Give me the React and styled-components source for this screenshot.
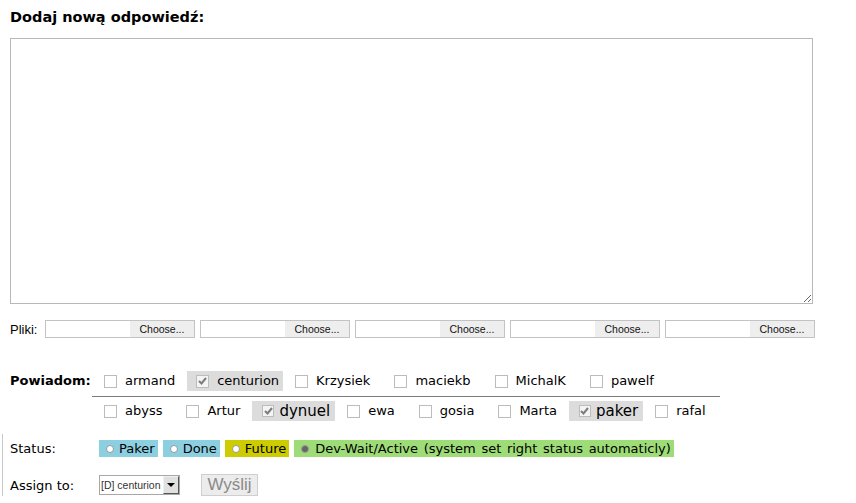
import React from "react";
import styled, { createGlobalStyle, css } from "styled-components";

const Global = createGlobalStyle`
  html, body { margin: 0; padding: 0; background: #fff; }
  body { font-family: "DejaVu Sans", Verdana, sans-serif; font-size: 13px; color: #000; }
`;

const Page = styled.div`
  width: 856px;
  height: 503px;
  padding-left: 10px;
  box-sizing: border-box;
  overflow: hidden;
`;

const Title = styled.h3`
  margin: 0;
  padding-top: 8px;
  height: 38px;
  box-sizing: border-box;
  font-size: 14.5px;
  line-height: 18px;
  font-weight: bold;
`;

const TextArea = styled.textarea`
  display: block;
  width: 803px;
  height: 266px;
  box-sizing: border-box;
  border: 1px solid #b8b8b8;
  margin: 0;
  padding: 2px;
  font-family: "DejaVu Sans", sans-serif;
  font-size: 13px;
  resize: both;
  outline: none;
`;

const FilesRow = styled.div`
  display: flex;
  align-items: center;
  margin-top: 16px;
  height: 18px;
  gap: 5px;
`;

const FilesLabel = styled.span`
  font-family: "Liberation Sans", Arial, sans-serif;
  font-size: 13px;
  width: 30px;
`;

const FileBox = styled.div`
  display: flex;
  width: 150px;
  height: 18px;
  box-sizing: border-box;
  border: 1px solid #c3c3c3;
  background: #fff;
`;

const FileName = styled.div`
  flex: 1;
`;

const FileButton = styled.div`
  width: 64px;
  background: #eeeeee;
  font-family: "Liberation Sans", Arial, sans-serif;
  font-size: 10.5px;
  line-height: 16px;
  text-align: center;
  color: #111;
`;

const NotifyRow = styled.div`
  display: flex;
  margin-top: 33px;
`;

const BoldLabel = styled.div`
  font-weight: bold;
  font-size: 13px;
  width: 82px;
  line-height: 20px;
`;

const NotifyLists = styled.div`
  display: flex;
  flex-direction: column;
  width: 628px;
`;

const UserLine = styled.div`
  display: flex;
  height: 20px;
  align-items: stretch;
  ${(p) =>
    p.$first &&
    css`
      border-bottom: 1px solid #7a7a7a;
      padding-bottom: 5px;
      margin-bottom: 4px;
    `}
`;

const UserItem = styled.label`
  display: flex;
  align-items: center;
  white-space: nowrap;
  line-height: 20px;
  ${(p) =>
    p.$checked
      ? css`
          background: #dcdcdc;
          padding: 0 ${p.$big ? 5 : 4}px 0 ${p.$big ? 10 : 9}px;
          gap: ${p.$big ? 5 : 8}px;
        `
      : css`
          padding: 0 12px;
          gap: 8px;
        `}
  font-size: ${(p) => (p.$big ? 15 : 13)}px;
`;

const Box = styled.span`
  display: inline-flex;
  align-items: center;
  justify-content: center;
  width: ${(p) => (p.$big ? 12 : 13)}px;
  height: ${(p) => (p.$big ? 12 : 13)}px;
  box-sizing: border-box;
  border: 1px solid #bcbcbc;
  background: ${(p) => (p.$checked ? "#f4f4f4" : "#fff")};
`;

const StatusBlock = styled.div`
  margin-left: -8px;
  padding-left: 7px;
  border-left: 1px solid #c8c8c8;
  margin-top: 13px;
  padding-top: 6px;
`;

const FieldRow = styled.div`
  display: flex;
  align-items: center;
  height: ${(p) => p.$h}px;
  margin-top: ${(p) => p.$mt || 0}px;
`;

const FieldLabel = styled.div`
  width: 89px;
  font-size: 13px;
`;

const StatusOptions = styled.div`
  display: flex;
  gap: 5px;
`;

const StatusOption = styled.label`
  display: flex;
  align-items: center;
  height: 17px;
  padding: 0 3px 0 7px;
  gap: ${(p) => (p.$on ? 6 : 5)}px;
  background: ${(p) => p.$bg};
  font-size: 13px;
  white-space: nowrap;
  word-spacing: ${(p) => (p.$on ? 1.5 : 0)}px;
`;

const Radio = styled.span`
  width: 8px;
  height: 8px;
  box-sizing: border-box;
  border-radius: 50%;
  border: 1px solid #9a9a9a;
  background: ${(p) => (p.$on ? "#666" : "#fff")};
`;

const Select = styled.div`
  display: flex;
  width: 81px;
  height: 20px;
  box-sizing: border-box;
  border: 1px solid #a8a8a8;
  background: #fff;
`;

const SelectText = styled.div`
  flex: 1;
  font-family: "Liberation Sans", Arial, sans-serif;
  font-size: 10.5px;
  line-height: 18px;
  padding-left: 1px;
  color: #333;
  white-space: nowrap;
  overflow: hidden;
`;

const SelectArrow = styled.div`
  width: 16px;
  box-sizing: border-box;
  border-top: 1px solid #f0f0f0;
  border-left: 1px solid #f0f0f0;
  border-right: 1px solid #555;
  border-bottom: 1px solid #555;
  background: #e0e0e0;
  display: flex;
  align-items: center;
  justify-content: center;
`;

const SendButton = styled.button`
  margin-left: 21px;
  width: 57px;
  height: 22px;
  box-sizing: border-box;
  border: 1px solid #cfcfcf;
  background: #ececec;
  color: #8a8a8a;
  font-family: "Liberation Sans", Arial, sans-serif;
  font-size: 17px;
  line-height: 18px;
  padding: 0;
`;

const CheckMark = () => (
  <svg width="9" height="8" viewBox="0 0 9 8">
    <path d="M1 4 L3.5 6.5 L8 1" fill="none" stroke="#7c7c7c" strokeWidth="2" />
  </svg>
);

const User = ({ name, checked, big }) => (
  <UserItem $checked={checked} $big={big}>
    <Box $checked={checked} $big={big}>{checked && <CheckMark />}</Box>
    {name}
  </UserItem>
);

const row1 = [
  { name: "armand" },
  { name: "centurion", checked: true },
  { name: "Krzysiek" },
  { name: "maciekb" },
  { name: "MichalK" },
  { name: "pawelf" },
];
const row2 = [
  { name: "abyss" },
  { name: "Artur" },
  { name: "dynuel", checked: true, big: true },
  { name: "ewa" },
  { name: "gosia" },
  { name: "Marta" },
  { name: "paker", checked: true, big: true },
  { name: "rafal" },
];

const statuses = [
  { label: "Paker", bg: "#8ccfe0" },
  { label: "Done", bg: "#8ccfe0" },
  { label: "Future", bg: "#cccc00" },
  { label: "Dev-Wait/Active (system set right status automaticly)", bg: "#9edc78", on: true },
];

export default function App() {
  return (
    <>
      <Global />
      <Page>
        <Title>Dodaj nową odpowiedź:</Title>
        <TextArea />
        <FilesRow>
          <FilesLabel>Pliki:</FilesLabel>
          {[0, 1, 2, 3, 4].map((i) => (
            <FileBox key={i}>
              <FileName />
              <FileButton>Choose...</FileButton>
            </FileBox>
          ))}
        </FilesRow>
        <NotifyRow>
          <BoldLabel>Powiadom:</BoldLabel>
          <NotifyLists>
            <UserLine $first>
              {row1.map((u) => (
                <User key={u.name} {...u} />
              ))}
            </UserLine>
            <UserLine>
              {row2.map((u) => (
                <User key={u.name} {...u} />
              ))}
            </UserLine>
          </NotifyLists>
        </NotifyRow>
        <StatusBlock>
          <FieldRow $h={17}>
            <FieldLabel>Status:</FieldLabel>
            <StatusOptions>
              {statuses.map((s) => (
                <StatusOption key={s.label} $bg={s.bg} $on={s.on}>
                  <Radio $on={s.on} />
                  {s.label}
                </StatusOption>
              ))}
            </StatusOptions>
          </FieldRow>
          <FieldRow $h={22} $mt={17}>
            <FieldLabel>Assign to:</FieldLabel>
            <Select>
              <SelectText>[D] centurion</SelectText>
              <SelectArrow>
                <svg width="8" height="4" viewBox="0 0 8 4">
                  <path d="M0 0 H8 L4 4 Z" fill="#000" />
                </svg>
              </SelectArrow>
            </Select>
            <SendButton>Wyślij</SendButton>
          </FieldRow>
        </StatusBlock>
      </Page>
    </>
  );
}
